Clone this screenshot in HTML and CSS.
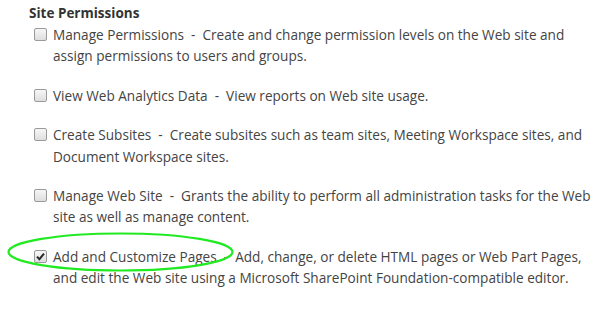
FILE: index.html
```html
<!DOCTYPE html>
<html>
<head>
<meta charset="utf-8">
<link rel="stylesheet" href="styles.css">
</head>
<body>
<div class="panel">
  <div class="heading">Site Permissions</div>
  <ul class="perms">
    <li class="perm">
      <span class="box"></span>
      <span class="text">Manage Permissions&nbsp; - &nbsp;Create and change permission levels on the Web site and<br>assign permissions to users and groups.</span>
    </li>
    <li class="perm">
      <span class="box"></span>
      <span class="text">View Web Analytics Data&nbsp; - &nbsp;View reports on Web site usage.</span>
    </li>
    <li class="perm">
      <span class="box"></span>
      <span class="text">Create Subsites&nbsp; - &nbsp;Create subsites such as team sites, Meeting Workspace sites, and<br>Document Workspace sites.</span>
    </li>
    <li class="perm">
      <span class="box"></span>
      <span class="text">Manage Web Site&nbsp; - &nbsp;Grants the ability to perform all administration tasks for the Web<br>site as well as manage content.</span>
    </li>
    <li class="perm">
      <span class="box checked"><svg viewBox="0 0 13 13" width="13" height="13"><path d="M3 6.6 L5.4 9.2 L10 3.6" fill="none" stroke="#2a2a2a" stroke-width="2"/></svg></span>
      <span class="text">Add and Customize Pages&nbsp; - &nbsp;Add, change, or delete HTML pages or Web Part Pages,<br>and edit the Web site using a Microsoft SharePoint Foundation-compatible editor.</span>
    </li>
  </ul>
  <svg class="circle" width="240" height="46" viewBox="0 0 240 46"><ellipse cx="120.5" cy="22" rx="112" ry="18.5" fill="none" stroke="#22ea22" stroke-width="2.2"/></svg>
</div>
</body>
</html>
```
FILE: styles.css
```css
html, body {
  margin: 0;
  padding: 0;
  background: #ffffff;
}
.panel {
  position: relative;
  width: 604px;
  height: 310px;
  padding: 4px 0 0 29px;
  box-sizing: border-box;
  font-family: "Open Sans", "Segoe UI", sans-serif;
  color: #444444;
}
.heading {
  font-size: 13.5px;
  font-weight: bold;
  color: #333333;
  line-height: 18px;
  margin-bottom: 2px;
}
.perms {
  list-style: none;
  margin: 0;
  padding: 0 0 0 5px;
  display: flex;
  flex-direction: column;
  gap: 18.2px;
}
.perm {
  display: flex;
  align-items: flex-start;
  gap: 6px;
  font-size: 13.6px;
  line-height: 21.3px;
}
.text {
  white-space: nowrap;
}
.box {
  flex: 0 0 auto;
  width: 11px;
  height: 11px;
  margin-top: 4px;
  border: 1px solid #9a9a9a;
  border-radius: 2px;
  background: linear-gradient(#f6f6f6, #dedede);
  position: relative;
}
.box svg {
  position: absolute;
  left: -1px;
  top: -1px;
}
.circle {
  position: absolute;
  left: 0;
  top: 230px;
}
```
